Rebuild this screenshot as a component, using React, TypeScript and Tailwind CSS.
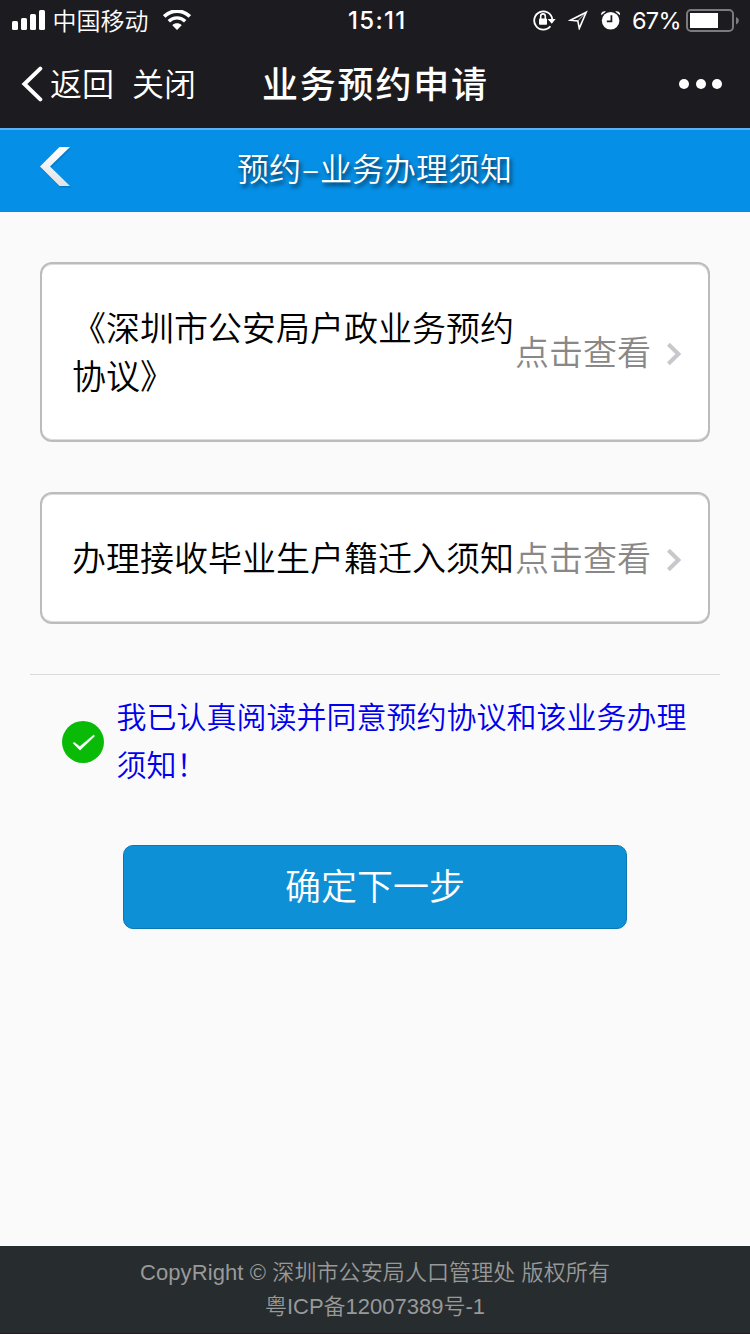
import React from 'react';

interface NoticeCardProps {
  title: string;
  className: string;
}

const StatusBar: React.FC = () => (
  <div className="flex h-10 items-center text-white">
    <svg className="ml-3 block h-5 w-[34px] shrink-0" viewBox="0 0 34 20" fill="currentColor">
      <rect x="0" y="11" width="6" height="9" rx="1.5" />
      <rect x="9" y="8" width="6" height="12" rx="1.5" />
      <rect x="18" y="4" width="6" height="16" rx="1.5" />
      <rect x="27" y="0" width="6" height="20" rx="1.5" />
    </svg>
    <span className="ml-[6.5px] w-24 pb-px text-2xl leading-10 font-[350] whitespace-nowrap">中国移动</span>
    <svg className="ml-[14.5px] block h-5 w-7 shrink-0" viewBox="0 0 28 20" fill="none" stroke="currentColor">
      <path d="M1.2 6.4C8.4 -0.7 19.6 -0.7 26.8 6.4" strokeWidth="3.6" />
      <path d="M5.8 11.2C10.4 6.7 17.6 6.7 22.2 11.2" strokeWidth="3.4" />
      <path d="M14 20L9.3 15.2C11.9 12.7 16.1 12.7 18.7 15.2Z" fill="currentColor" stroke="none" />
    </svg>
    <span className="mt-px ml-[157px] w-[60px] font-[Inter] text-[24px] leading-10 font-medium tracking-[1.3px] whitespace-nowrap">
      15:11
    </span>

    <svg className="ml-[125px] block h-[22px] w-[23px] shrink-0" viewBox="0 0 23 22" fill="none" stroke="currentColor">
      <path d="M17.4 17.2A9.1 9.1 0 1 1 19.3 10" strokeWidth="1.8" />
      <path d="M14.6 10H22.6L18.8 14.8Z" fill="currentColor" stroke="none" />
      <rect x="6" y="9.4" width="8" height="6.4" rx="0.8" fill="currentColor" stroke="none" />
      <path d="M7.7 10V7.2A2.3 2.3 0 0 1 12.3 7.2V10" strokeWidth="1.6" />
    </svg>
    <svg className="ml-[12px] block h-5 w-5 shrink-0" viewBox="0 0 20 20" fill="none" stroke="currentColor">
      <path d="M18.2 2.2L2.4 10.2L9.8 10.9L11.3 18.4Z" strokeWidth="1.6" />
      <path d="M18.2 2.2L9.8 10.9" strokeWidth="0.8" />
    </svg>
    <svg className="ml-[13px] block h-5 w-5 shrink-0" viewBox="0 0 20 20" fill="currentColor">
      <circle cx="9.6" cy="10.8" r="8.8" />
      <path d="M0.2 5.2V3.2Q1.2 1 4 1.2L5 1.6ZM19 5.2V3.2Q18 1 15.2 1.2L14.2 1.6Z" />
      <path d="M10.4 5.2V11.4H5.8" fill="none" stroke="#1c1b20" strokeWidth="1.8" />
    </svg>
    <span className="mt-[2px] ml-[11px] w-[50px] font-[Inter] text-[23.5px] leading-10 font-normal tracking-[-0.7px] whitespace-nowrap">
      67%
    </span>
    <svg className="ml-[4px] block h-[23px] w-[54px] shrink-0" viewBox="0 0 54 23">
      <rect x="1" y="1" width="46" height="21" rx="4" fill="none" stroke="#7b7a7e" strokeWidth="2" />
      <rect x="4" y="4" width="28" height="15" fill="#fff" />
      <path d="M50 8C53.8 9.4 53.8 14 50 15.4Z" fill="#7b7a7e" />
    </svg>
  </div>
);

const NavBar: React.FC = () => (
  <div className="flex h-[88px] items-center text-white">
    <svg className="ml-[21px] block h-9 w-[22px] shrink-0" viewBox="0 0 22 36" fill="none" stroke="currentColor">
      <path d="M19.3 2.6L3.4 18L19.3 33.4" strokeWidth="4" strokeLinecap="round" strokeLinejoin="miter" />
    </svg>
    <span className="ml-[7px] w-16 pb-[3px] text-[32px] leading-[85px] font-[350] whitespace-nowrap">返回</span>
    <span className="ml-[18px] w-16 pb-[3px] text-[32px] leading-[85px] font-[350] whitespace-nowrap">关闭</span>
    <h1 className="ml-[66px] w-[228px] pb-[4px] text-[36px] leading-[84px] font-medium tracking-[1.8px] whitespace-nowrap">
      业务预约申请
    </h1>
    <div className="ml-[189px] flex gap-[6.5px]">
      <i className="block size-[10px] rounded-full bg-white" />
      <i className="block size-[10px] rounded-full bg-white" />
      <i className="block size-[10px] rounded-full bg-white" />
    </div>
  </div>
);

const PageHeader: React.FC = () => (
  <header className="flex h-[84px] border-t-2 border-b border-t-[#5eb0f5] border-b-[#1f80cc] bg-[#068fe6]">
    <svg className="mt-[16px] ml-[39px] block h-[44px] w-[34px] shrink-0 overflow-visible" viewBox="0 0 34 44">
      <defs>
        <linearGradient id="backFill" x1="0" y1="0" x2="0" y2="1">
          <stop offset="0" stopColor="#fff" />
          <stop offset="1" stopColor="#e2e2e2" />
        </linearGradient>
      </defs>
      <path d="M21 2.5H32L12 22L32 41.5H21L1.5 22Z" fill="#045a96" opacity="0.35" />
      <path d="M20.5 1H31L11 20.5L31 40H20.5L1 20.5Z" fill="url(#backFill)" />
    </svg>
    <h2 className="ml-[164px] text-[32px] leading-[74px] font-[350] whitespace-nowrap text-white [text-shadow:2px_3px_4px_rgba(0,0,0,0.65)]">
      预约<span className="inline-block w-[19px] text-center">–</span>业务办理须知
    </h2>
  </header>
);

const NoticeCard: React.FC<NoticeCardProps> = ({ title, className }) => (
  <div
    className={`flex items-center rounded-xl border-2 border-[#bcbcbc] bg-white pl-[30px] text-[34px] leading-[48px] font-[350] shadow-[inset_0_1px_0_#dcdcdc,inset_0_-1px_0_#dcdcdc] ${className}`}
  >
    <p className="w-[443px] shrink-0 pb-[3px] text-black">{title}</p>
    <span className="w-[136px] shrink-0 pb-[3px] whitespace-nowrap text-[#888]">点击查看</span>
    <svg className="mt-1 ml-[15px] block h-6 w-4 shrink-0" viewBox="0 0 16 24" fill="none" stroke="#c7c7cc">
      <path d="M2.4 2.2L12.4 12L2.4 21.8" strokeWidth="4" />
    </svg>
  </div>
);

export default function App() {
  return (
    <div className="flex h-[1334px] w-[750px] flex-col overflow-hidden bg-[#fafafa] font-['Noto_Sans_CJK_SC',sans-serif]">
      <div className="h-32 shrink-0 bg-[#1c1b20]">
        <StatusBar />
        <NavBar />
      </div>
      <PageHeader />

      <main className="flex-1">
        <NoticeCard title="《深圳市公安局户政业务预约协议》" className="mx-10 mt-[50px] h-[180px]" />
        <NoticeCard title="办理接收毕业生户籍迁入须知" className="mx-10 mt-[50px] h-[132px]" />

        <div className="mx-[30px] mt-[50px] h-px bg-[#d9d9d9]" />

        <label className="mt-[16px] flex pl-[62px]">
          <svg className="mt-[30px] block size-[42px] shrink-0" viewBox="0 0 42 42">
            <circle cx="21" cy="21" r="21" fill="#09bb07" />
            <path d="M11 22.2L12.2 21.2L17.8 25.4L31.6 14L32.8 15L18 29.2Z" fill="#fff" stroke="#fff" strokeWidth="0.3" />
          </svg>
          <span className="ml-[12.5px] w-[572px] text-[30px] leading-[48px] font-[350] text-[#0000ee]">
            我已认真阅读并同意预约协议和该业务办理须知！
          </span>
        </label>

        <button
          type="button"
          className="mx-auto mt-[58px] block h-[84px] w-[504px] rounded-[10px] border border-[#0a78b4] bg-[#0e90d7] pb-[6px] text-[36px] leading-[76px] font-[350] text-white"
        >
          确定下一步
        </button>
      </main>

      <footer className="h-[88px] shrink-0 border-b border-[#251a24] bg-[#272c2e] pt-[10px] text-center font-['Liberation_Sans','Noto_Sans_CJK_SC',sans-serif] text-[22px] leading-[34px] font-[350] text-[#999]">
        <p className="tracking-[0.1px]">CopyRight © 深圳市公安局人口管理处 版权所有</p>
        <p>粤ICP备12007389号-1</p>
      </footer>
    </div>
  );
}
